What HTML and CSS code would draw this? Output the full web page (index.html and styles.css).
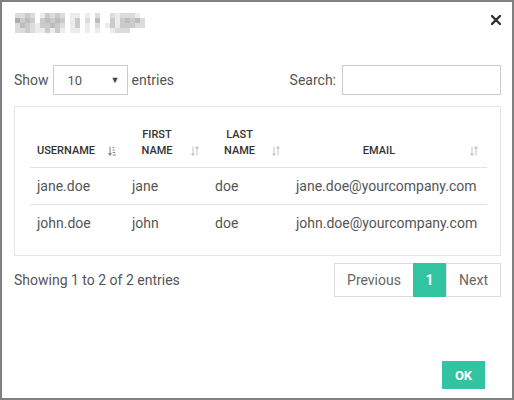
FILE: index.html
```html
<!DOCTYPE html>
<html>
<head>
<meta charset="utf-8">
<link rel="stylesheet" href="styles.css">
</head>
<body>
<div class="dialog">
  <div class="head">
    <div class="mosaic" aria-label="Title">
      <i class="m2"></i><i class="m2"></i><i class="m3"></i><i class="m2"></i><i class="m0"></i><i class="m1"></i><i class="m3"></i><i class="m2"></i><i class="m3"></i><i class="m2"></i><i class="m0"></i><i class="m1"></i><i class="m1"></i><i class="m0"></i><i class="m1"></i><i class="m0"></i><i class="m2"></i><i class="m0"></i><i class="m0"></i><i class="m2"></i><i class="m1"></i><i class="m2"></i><i class="m2"></i><i class="m2"></i><i class="m1"></i><i class="m0"></i>
      <i class="m5"></i><i class="m3"></i><i class="m4"></i><i class="m3"></i><i class="m0"></i><i class="m3"></i><i class="m4"></i><i class="m3"></i><i class="m4"></i><i class="m3"></i><i class="m0"></i><i class="m1"></i><i class="m3"></i><i class="m0"></i><i class="m2"></i><i class="m0"></i><i class="m4"></i><i class="m0"></i><i class="m0"></i><i class="m3"></i><i class="m1"></i><i class="m3"></i><i class="m4"></i><i class="m3"></i><i class="m4"></i><i class="m2"></i>
      <i class="m2"></i><i class="m4"></i><i class="m3"></i><i class="m2"></i><i class="m1"></i><i class="m3"></i><i class="m3"></i><i class="m4"></i><i class="m3"></i><i class="m2"></i><i class="m0"></i><i class="m1"></i><i class="m3"></i><i class="m0"></i><i class="m1"></i><i class="m0"></i><i class="m2"></i><i class="m0"></i><i class="m1"></i><i class="m3"></i><i class="m1"></i><i class="m3"></i><i class="m3"></i><i class="m3"></i><i class="m2"></i><i class="m2"></i>
      <i class="m2"></i><i class="m2"></i><i class="m3"></i><i class="m2"></i><i class="m1"></i><i class="m1"></i><i class="m3"></i><i class="m1"></i><i class="m3"></i><i class="m1"></i><i class="m0"></i><i class="m1"></i><i class="m1"></i><i class="m0"></i><i class="m1"></i><i class="m0"></i><i class="m1"></i><i class="m0"></i><i class="m0"></i><i class="m1"></i><i class="m2"></i><i class="m2"></i><i class="m2"></i><i class="m0"></i><i class="m0"></i><i class="m0"></i>
    </div>
    <button class="close" aria-label="Close">
      <svg width="10" height="10" viewBox="0 0 10 10"><path d="M1 1L9 9M9 1L1 9" stroke="#333" stroke-width="2.4" stroke-linecap="square"/></svg>
    </button>
  </div>

  <div class="controls">
    <label class="length">Show
      <span class="select"><span>10</span><span class="caret">▼</span></span>
      entries</label>
    <label class="search">Search: <span class="input"></span></label>
  </div>

  <div class="tablebox">
    <table>
      <thead>
        <tr>
          <th class="c1">USERNAME<span class="sort on"><svg width="8" height="10" viewBox="0 0 8 10"><path d="M2 0.5V9M0.5 7.2L2 9.2L3.5 7.2" stroke="currentColor" stroke-width="1.1" fill="none"/><path d="M4.6 1.5H6.2M4.6 4H6.8M4.6 6.5H7.4M4.6 9H8" stroke="currentColor" stroke-width="1.1"/></svg></span></th>
          <th class="c2">FIRST NAME<span class="sort"><svg width="8" height="10" viewBox="0 0 8 10"><path d="M2 0.5V9.2M0.5 7.4L2 9.4L3.5 7.4" stroke="currentColor" stroke-width="1.1" fill="none"/><path d="M6 9.5V0.8M4.5 2.6L6 0.6L7.5 2.6" stroke="currentColor" stroke-width="1.1" fill="none"/></svg></span></th>
          <th class="c3">LAST NAME<span class="sort"><svg width="8" height="10" viewBox="0 0 8 10"><path d="M2 0.5V9.2M0.5 7.4L2 9.4L3.5 7.4" stroke="currentColor" stroke-width="1.1" fill="none"/><path d="M6 9.5V0.8M4.5 2.6L6 0.6L7.5 2.6" stroke="currentColor" stroke-width="1.1" fill="none"/></svg></span></th>
          <th class="c4">EMAIL<span class="sort"><svg width="8" height="10" viewBox="0 0 8 10"><path d="M2 0.5V9.2M0.5 7.4L2 9.4L3.5 7.4" stroke="currentColor" stroke-width="1.1" fill="none"/><path d="M6 9.5V0.8M4.5 2.6L6 0.6L7.5 2.6" stroke="currentColor" stroke-width="1.1" fill="none"/></svg></span></th>
        </tr>
      </thead>
      <tbody>
        <tr><td>jane.doe</td><td>jane</td><td>doe</td><td>jane.doe@yourcompany.com</td></tr>
        <tr><td>john.doe</td><td>john</td><td>doe</td><td>john.doe@yourcompany.com</td></tr>
      </tbody>
    </table>
  </div>

  <div class="footer">
    <div class="info">Showing 1 to 2 of 2 entries</div>
    <div class="pager">
      <span class="pg">Previous</span><span class="pg cur">1</span><span class="pg">Next</span>
    </div>
  </div>

  <div class="actions">
    <button class="ok">OK</button>
  </div>
</div>
</body>
</html>
```
FILE: styles.css
```css
* { box-sizing: border-box; }
html, body { margin: 0; padding: 0; background: #fff; }
body {
  font-family: Roboto, "Liberation Sans", sans-serif;
  font-size: 14px;
  color: #555;
}
.dialog {
  width: 514px;
  height: 400px;
  border: 2px solid #808080;
  padding: 0 11px 0 12px;
  display: flex;
  flex-direction: column;
}
.head {
  display: flex;
  justify-content: space-between;
  align-items: flex-start;
  padding-top: 11px;
  height: 63px;
}
.mosaic {
  display: grid;
  grid-template-columns: repeat(26, 5px);
  grid-auto-rows: 5px;
  margin-left: 1px;
}
.mosaic i { display: block; }
.m0 { background: #fff; }
.m1 { background: #ececec; }
.m2 { background: #dcdcdc; }
.m3 { background: #cbcbcb; }
.m4 { background: #bdbdbd; }
.m5 { background: #acacac; }
.close {
  border: 0;
  background: none;
  padding: 0;
  margin: 2px 0 0 0;
  width: 10px;
  height: 10px;
  display: flex;
}
.controls {
  display: flex;
  justify-content: space-between;
  align-items: center;
  height: 30px;
}
.length, .search {
  display: flex;
  align-items: center;
  gap: 4px;
}
.select {
  width: 75px;
  height: 30px;
  border: 1px solid #ccc;
  display: flex;
  align-items: center;
  justify-content: space-between;
  padding: 0 7px 0 14px;
  color: #555;
  font-size: 13px;
}
.caret { font-size: 9px; color: #444; }
.input {
  display: block;
  width: 159px;
  height: 30px;
  border: 1px solid #ccc;
}
.search { gap: 6px; }
.tablebox {
  margin-top: 11px;
  border: 1px solid #e3e6e8;
  padding: 12px 13px 13px 15px;
}
table {
  width: 457px;
  border-collapse: collapse;
  table-layout: fixed;
}
th {
  position: relative;
  font-size: 11px;
  font-weight: 500;
  color: #333;
  line-height: 16px;
  padding: 8px 25px 8px 7px;
  text-align: center;
  vertical-align: bottom;
  border-bottom: 1px solid #dfe3e6;
}
th.c1 { width: 94px; text-align: left; padding-bottom: 8px; }
th.c2 { width: 84px; }
th.c3 { width: 81px; }
th.c4 { width: 198px; }
.sort {
  position: absolute;
  right: 9px;
  bottom: 11px;
  color: #c8c8c8;
  display: flex;
}
.sort.on { color: #8a8a8a; right: 8px; }
td {
  padding: 0 7px;
  height: 37px;
  line-height: 16px;
  color: #555;
  white-space: nowrap;
}
tbody tr:first-child td { border-bottom: 1px solid #dfe3e6; }
tbody td:nth-child(2) { padding-left: 8px; }
.footer {
  display: flex;
  justify-content: space-between;
  align-items: center;
  margin-top: 7px;
}
.pager { display: flex; height: 34px; border: 1px solid #dcdcdc; }
.pg {
  display: flex;
  align-items: center;
  justify-content: center;
  color: #666;
  font-size: 14px;
}
.pg:first-child { width: 78px; }
.pg.cur { width: 33px; background: #32c3a1; color: #fff; font-weight: 700; margin: -1px 0; }
.pg:last-child { width: 54px; border-left: 1px solid #e4e4e4; }
.actions {
  display: flex;
  justify-content: flex-end;
  margin-top: auto;
  padding: 0 16px 9px 0;
}
.ok {
  width: 43px;
  height: 28px;
  border: 0;
  background: #32c3a1;
  color: #fff;
  font-family: Roboto, "Liberation Sans", sans-serif;
  font-weight: 700;
  font-size: 13px;
  padding: 0;
}
```
